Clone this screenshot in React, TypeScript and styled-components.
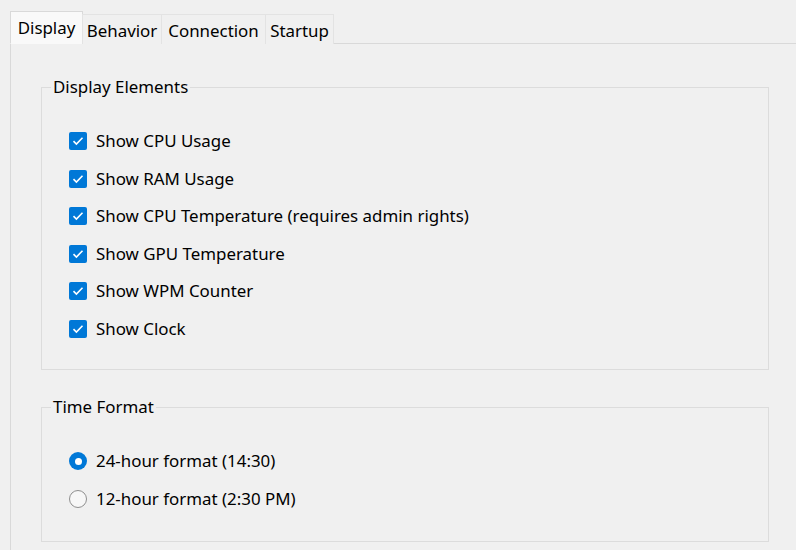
import React, { useState } from "react";
import styled, { createGlobalStyle } from "styled-components";

const Global = createGlobalStyle`
  html, body { margin: 0; padding: 0; background: #f0f0f0; }
  body { font-family: "Noto Sans", "Open Sans", sans-serif; font-size: 16.9px; color: #000; }
`;

const Root = styled.div`
  width: 796px;
  height: 550px;
  overflow: hidden;
  background: #f0f0f0;
  padding: 11px 0 0 10px;
  box-sizing: border-box;
`;

const TabStrip = styled.div`
  display: flex;
  align-items: flex-end;
  height: 33px;
  position: relative;
  z-index: 1;
`;

const Tab = styled.div<{ $active?: boolean; $w: number }>`
  box-sizing: border-box;
  width: ${(p) => p.$w}px;
  height: ${(p) => (p.$active ? 33 : 30)}px;
  display: flex;
  align-items: center;
  justify-content: center;
  padding-top: ${(p) => (p.$active ? 1 : 3)}px;
  background: ${(p) => (p.$active ? "#f9f9f9" : "#f0f0f0")};
  border: 1px solid ${(p) => (p.$active ? "#d9d9d9" : "#e3e3e3")};
  border-bottom: ${(p) => (p.$active ? "1px solid #f9f9f9" : "none")};
  margin-left: ${(p) => (p.$active ? 0 : -1)}px;
  white-space: nowrap;
  line-height: 22px;
  cursor: default;
`;

const Panel = styled.div`
  margin-top: -1px;
  border: 1px solid #d9d9d9;
  border-right: none;
  background: #f0f0f0;
  padding: 32px 0 0 30px;
  height: 520px;
  box-sizing: border-box;
  width: 800px;
`;

const Group = styled.fieldset<{ $h: number }>`
  box-sizing: border-box;
  width: 728px;
  height: ${(p) => p.$h}px;
  margin: 0 0 26px 0;
  padding: 0 0 0 9px;
  border: 1px solid #dcdcdc;
  min-width: 0;
`;

const Legend = styled.legend`
  padding: 0 2px;
  line-height: 22px;
`;

const List = styled.div`
  display: flex;
  flex-direction: column;
  gap: 15.5px;
  padding: 32px 0 0 18px;
`;

const Row = styled.label`
  display: flex;
  align-items: center;
  gap: 9px;
  height: 22px;
  line-height: 22px;
  cursor: default;
`;

const Box = styled.span`
  width: 18px;
  height: 18px;
  box-sizing: border-box;
  background: #0078d7;
  border-radius: 2px;
  display: flex;
  align-items: center;
  justify-content: center;
  flex: none;
`;

const Radio = styled.span<{ $on?: boolean }>`
  width: 18px;
  height: 18px;
  box-sizing: border-box;
  border-radius: 50%;
  flex: none;
  display: flex;
  align-items: center;
  justify-content: center;
  background: ${(p) => (p.$on ? "#0078d7" : "#f7f7f7")};
  border: ${(p) => (p.$on ? "none" : "1px solid #8f8f8f")};
`;

const Dot = styled.span`
  width: 7px;
  height: 7px;
  border-radius: 50%;
  background: #fff;
`;

const Check = () => (
  <svg width="12" height="10" viewBox="0 0 12 10">
    <path d="M1.5 5.2 L4.4 8 L10.5 1.8" fill="none" stroke="#fff" strokeWidth="1.6" />
  </svg>
);

const tabs = [
  { label: "Display", w: 73 },
  { label: "Behavior", w: 80 },
  { label: "Connection", w: 105 },
  { label: "Startup", w: 69 },
];

const elements = [
  "Show CPU Usage",
  "Show RAM Usage",
  "Show CPU Temperature (requires admin rights)",
  "Show GPU Temperature",
  "Show WPM Counter",
  "Show Clock",
];

export default function App() {
  const [fmt, setFmt] = useState(24);
  return (
    <Root>
      <Global />
      <TabStrip>
        {tabs.map((t, i) => (
          <Tab key={t.label} $active={i === 0} $w={t.w}>
            {t.label}
          </Tab>
        ))}
      </TabStrip>
      <Panel>
        <Group $h={294}>
          <Legend>Display Elements</Legend>
          <List>
            {elements.map((e) => (
              <Row key={e}>
                <Box>
                  <Check />
                </Box>
                {e}
              </Row>
            ))}
          </List>
        </Group>
        <Group $h={146}>
          <Legend>Time Format</Legend>
          <List>
            <Row onClick={() => setFmt(24)}>
              <Radio $on={fmt === 24}>{fmt === 24 && <Dot />}</Radio>
              24-hour format (14:30)
            </Row>
            <Row onClick={() => setFmt(12)}>
              <Radio $on={fmt === 12}>{fmt === 12 && <Dot />}</Radio>
              12-hour format (2:30 PM)
            </Row>
          </List>
        </Group>
      </Panel>
    </Root>
  );
}
